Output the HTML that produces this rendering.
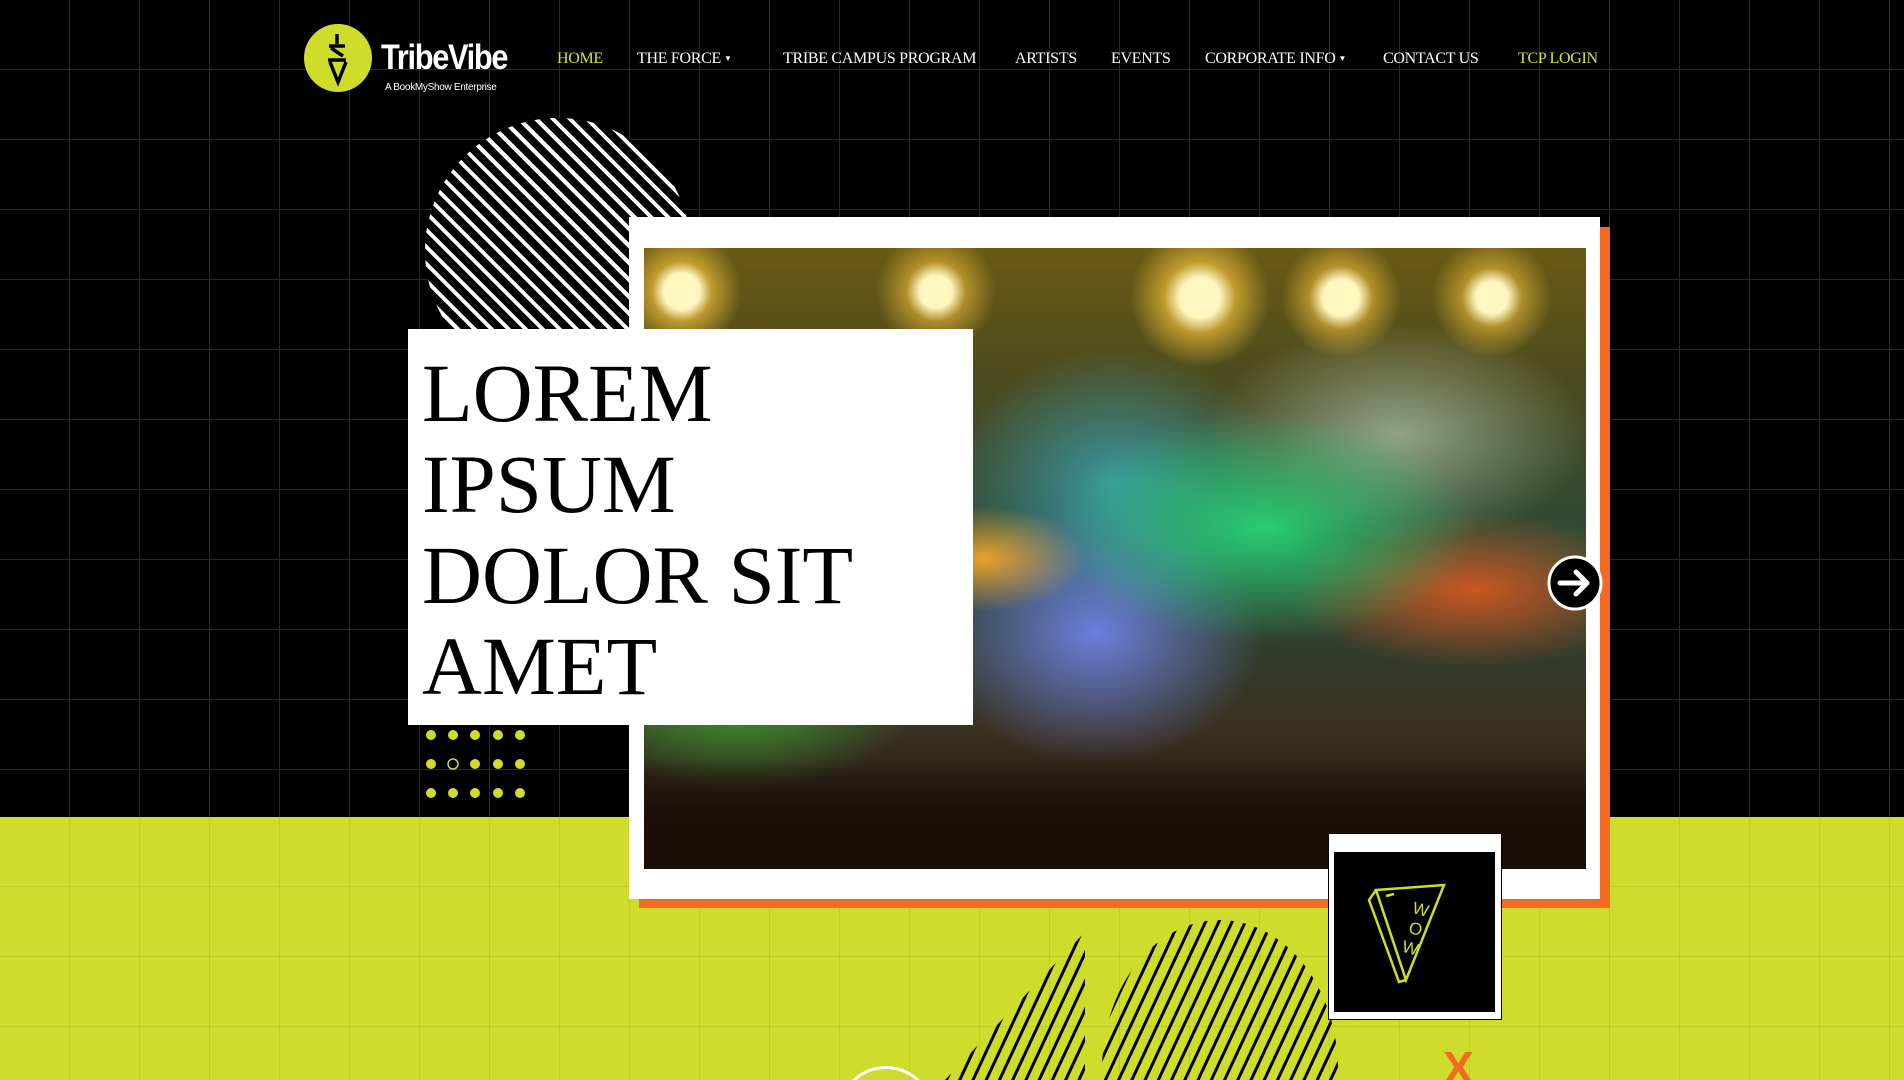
<!DOCTYPE html>
<html><head><meta charset="utf-8"><style>
*{margin:0;padding:0;box-sizing:border-box}
html,body{width:1904px;height:1080px;overflow:hidden;background:#000}
body{position:relative;font-family:"Liberation Serif",serif}
#wrap{position:absolute;left:0;top:0;width:1904px;height:1080px;overflow:hidden}
.top{position:absolute;left:0;top:0;width:1904px;height:817px;background:#000;
background-image:linear-gradient(#2a2a2a 1px,transparent 1px),linear-gradient(90deg,#2a2a2a 1px,transparent 1px);
background-size:70px 70px;background-position:69px 69px}
.bot{position:absolute;left:0;top:817px;width:1904px;height:263px;background:#cfdc2b;
background-image:linear-gradient(rgba(0,0,0,.07) 1px,transparent 1px),linear-gradient(90deg,rgba(0,0,0,.07) 1px,transparent 1px);
background-size:70px 70px;background-position:69px 69px}
.nav a{position:absolute;top:50px;font-size:16px;color:#fff;text-decoration:none;white-space:nowrap;letter-spacing:-0.3px}
.nav a.y{color:#d6e33a}
.car{font-size:8px;vertical-align:2px;margin-left:3px}
.abs{position:absolute}
</style></head><body><div id="wrap">
<div class="top"></div>
<div class="bot"></div>

<!-- logo -->
<div class="abs" style="left:304px;top:24px;width:68px;height:68px;border-radius:50%;background:#cfdc2b"></div>
<svg class="abs" style="left:304px;top:24px" width="68" height="68" viewBox="0 0 68 68">
<path d="M33 10 L33 20 M25 22 L41 22 M27 24 L39 32 M24 36 L42 36 M26 38 L34 58 L42 38" stroke="#000" stroke-width="3.5" fill="none"/>
</svg>
<div class="abs" style="left:381px;top:38px;font-family:'Liberation Sans',sans-serif;font-weight:bold;font-size:35px;color:#fff;letter-spacing:-1.5px;transform:scaleX(.88);transform-origin:left">TribeVibe</div>
<div class="abs" style="left:385px;top:82px;font-family:'Liberation Sans',sans-serif;font-size:10px;color:#fff;letter-spacing:-0.3px">A BookMyShow Enterprise</div>

<div class="nav">
<a class="y" style="left:557px">HOME</a>
<a style="left:637px">THE FORCE<span class="car">▼</span></a>
<a style="left:783px">TRIBE CAMPUS PROGRAM</a>
<a style="left:1015px">ARTISTS</a>
<a style="left:1111px">EVENTS</a>
<a style="left:1205px">CORPORATE INFO<span class="car">▼</span></a>
<a style="left:1383px">CONTACT US</a>
<a class="y" style="left:1518px">TCP LOGIN</a>
</div>

<!-- striped circle -->
<div class="abs" style="left:425px;top:118px;width:266px;height:266px;border-radius:50%;
background:repeating-linear-gradient(45deg,#fff 0 4px,#000 4px 12px)"></div>

<!-- frame -->
<div class="abs" style="left:639px;top:227px;width:971px;height:681px;background:#f26b21"></div>
<div class="abs" style="left:629px;top:217px;width:971px;height:682px;background:#fff"></div>
<div class="abs" style="left:644px;top:248px;width:942px;height:621px;overflow:hidden;background:#1a1408">
 <div class="abs" style="inset:0;background:
 radial-gradient(circle at 4% 7%,#fff6c0 0 18px,rgba(255,200,60,.6) 30px,transparent 60px),
 radial-gradient(circle at 31% 7%,#fff6c0 0 16px,rgba(255,200,60,.5) 30px,transparent 60px),
 radial-gradient(circle at 59% 8%,#fff6c0 0 20px,rgba(255,200,60,.6) 36px,transparent 70px),
 radial-gradient(circle at 74% 8%,#fff6c0 0 18px,rgba(255,200,60,.5) 32px,transparent 60px),
 radial-gradient(circle at 90% 8%,#fff6c0 0 16px,rgba(255,200,60,.5) 30px,transparent 60px),
 radial-gradient(ellipse at 8% 50%,rgba(255,150,30,.9) 0,transparent 14%),
 radial-gradient(ellipse at 36% 50%,rgba(255,170,40,.9) 0,transparent 12%),
 radial-gradient(ellipse at 66% 45%,rgba(40,220,120,.9) 0,transparent 24%),
 radial-gradient(ellipse at 80% 30%,rgba(200,220,200,.6) 0,transparent 18%),
 radial-gradient(ellipse at 88% 55%,rgba(230,90,30,.85) 0,transparent 16%),
 radial-gradient(ellipse at 10% 72%,rgba(60,200,60,.75) 0,transparent 15%),
 radial-gradient(ellipse at 48% 62%,rgba(110,130,230,.95) 0,transparent 24%),
 radial-gradient(ellipse at 50% 38%,rgba(60,180,210,.7) 0,transparent 25%),
 linear-gradient(#6a5a14 0,#4a4a1e 22%,#2a4a38 50%,#3a3020 78%,#120c06 100%)"></div>
 <div class="abs" style="left:0;right:0;bottom:0;height:110px;background:linear-gradient(transparent,#1a0e06 60%)"></div>
</div>

<!-- arrow -->
<svg class="abs" style="left:1547px;top:555px" width="56" height="56" viewBox="0 0 56 56">
<circle cx="28" cy="28" r="26" fill="#000" stroke="#fff" stroke-width="3"/>
<path d="M13 28 H40 M29 17 L40 28 L29 39" stroke="#fff" stroke-width="5" fill="none" stroke-linecap="round" stroke-linejoin="round"/>
</svg>

<!-- text box -->
<div class="abs" style="left:408px;top:329px;width:565px;height:396px;background:#fff"></div>
<div class="abs" style="left:422px;top:348px;font-size:83px;line-height:91px;color:#000">LOREM<br>IPSUM<br>DOLOR SIT<br>AMET</div>

<!-- dots -->
<svg class="abs" style="left:420px;top:725px" width="120" height="80">
<g fill="#cfdc2b">
<circle cx="11" cy="10" r="5"/><circle cx="33" cy="10" r="5"/><circle cx="55" cy="10" r="5"/><circle cx="78" cy="10" r="5"/><circle cx="100" cy="10" r="5"/>
<circle cx="11" cy="39" r="5"/><circle cx="55" cy="39" r="5"/><circle cx="78" cy="39" r="5"/><circle cx="100" cy="39" r="5"/>
<circle cx="11" cy="68" r="5"/><circle cx="33" cy="68" r="5"/><circle cx="55" cy="68" r="5"/><circle cx="78" cy="68" r="5"/><circle cx="100" cy="68" r="5"/>
</g>
<circle cx="33" cy="39" r="5" fill="none" stroke="#cfdc2b" stroke-width="1.5"/>
</svg>

<!-- bottom stripes -->
<svg class="abs" style="left:940px;top:920px" width="400" height="160">
<defs>
<pattern id="st" width="12" height="12" patternUnits="userSpaceOnUse" patternTransform="rotate(25)">
<rect width="3" height="12" fill="#000"/></pattern>
<clipPath id="c1"><polygon points="145,12 145,160 5,160"/></clipPath>
<clipPath id="c2"><ellipse cx="280" cy="150" rx="118" ry="150"/></clipPath>
</defs>
<rect width="400" height="160" fill="url(#st)" clip-path="url(#c1)"/>
<rect x="160" width="240" height="160" fill="url(#st)" clip-path="url(#c2)"/>
</svg>

<!-- white ring -->
<div class="abs" style="left:838px;top:1066px;width:96px;height:96px;border-radius:50%;border:3px solid #fff"></div>
<!-- orange X -->
<div class="abs" style="left:1443px;top:1045px;font-family:'Liberation Sans',sans-serif;font-weight:bold;font-size:46px;color:#f26b21;line-height:1">X</div>

<!-- wow card -->
<div class="abs" style="left:1328px;top:833px;width:174px;height:187px;background:#fff;border:1px solid #000"></div>
<div class="abs" style="left:1334px;top:852px;width:161px;height:160px;background:#000"></div>
<svg class="abs" style="left:1334px;top:852px" width="161" height="160" viewBox="0 0 161 160">
<g stroke="#cfdc2b" stroke-width="2.5" fill="none">
<path d="M42 38 L110 33 L72 128 Z"/>
<path d="M42 38 L35 48 L65 130 L72 128"/>
<path d="M52 44 L60 42"/>
</g>
<g font-family="Liberation Sans,sans-serif" font-size="17" fill="#cfdc2b" text-anchor="middle" transform="rotate(15 80 75)">
<text x="82" y="62">W</text><text x="82" y="82">O</text><text x="82" y="102">W</text>
</g>
</svg>
</div></body></html>
